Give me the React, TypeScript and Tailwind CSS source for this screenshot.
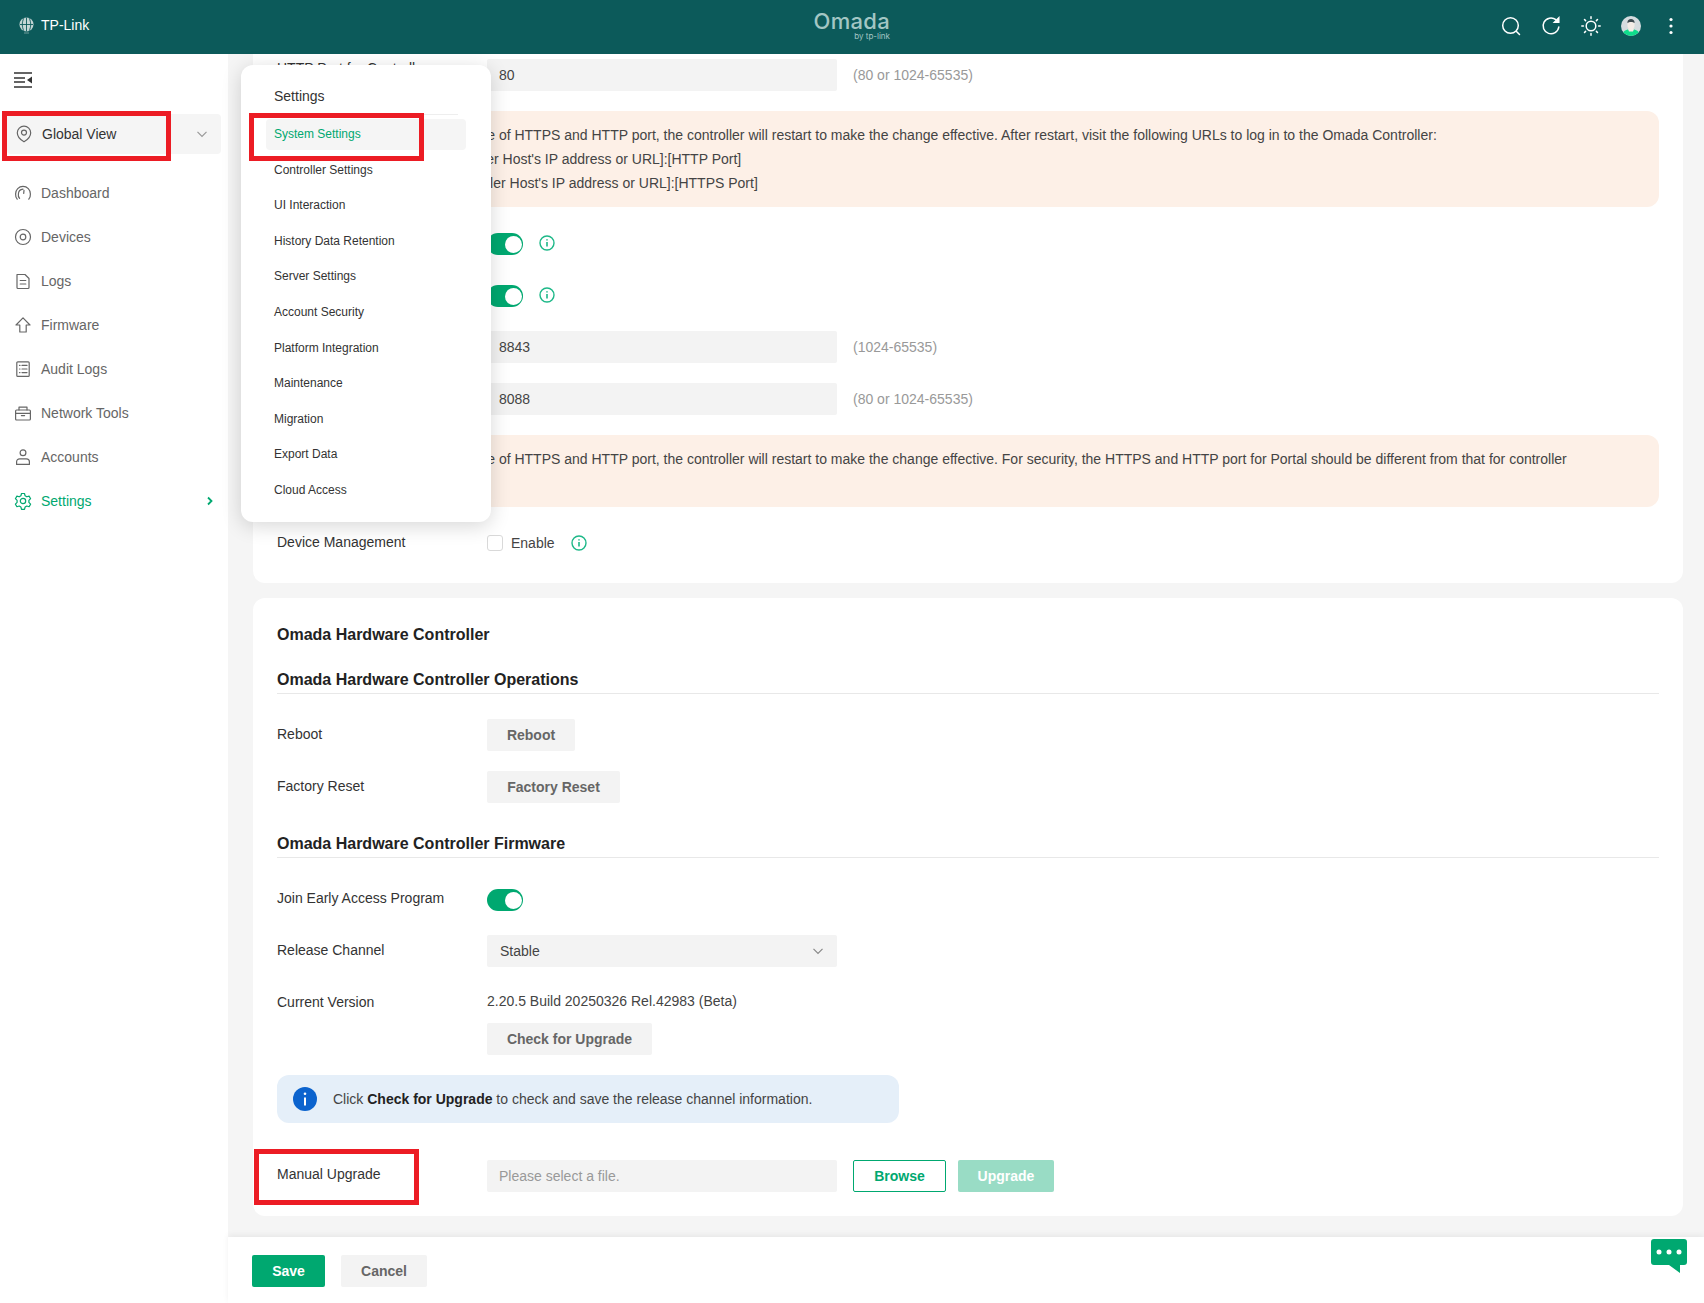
import React from "react";

const font = { fontFamily: '"Liberation Sans", Arial, sans-serif' };

function Ic({ children, size = 18, color = "#666", sw = 1.2 }: { children: React.ReactNode; size?: number; color?: string; sw?: number }) {
  return (
    <svg width={size} height={size} viewBox="0 0 18 18" fill="none" stroke={color} strokeWidth={sw} strokeLinecap="round" strokeLinejoin="round" className="shrink-0">
      {children}
    </svg>
  );
}

const navItems: { label: string; icon: React.ReactNode }[] = [
  { label: "Dashboard", icon: <Ic><path d="M3.2 15.2A7.6 7.6 0 0 1 1.6 10 7.4 7.4 0 0 1 9 2.4 7.4 7.4 0 0 1 16.4 10a7.6 7.6 0 0 1-1.6 5.2" /><path d="M5.6 14.4A5 5 0 0 1 4.4 10 5 5 0 0 1 9 5.2" /><path d="M10 6.4 9.7 9.4" /></Ic> },
  { label: "Devices", icon: <Ic><circle cx="9" cy="9" r="7.5" /><circle cx="9" cy="9" r="2.8" /></Ic> },
  { label: "Logs", icon: <Ic><path d="M3 2.5h8l4 4v9a1 1 0 0 1-1 1H4a1 1 0 0 1-1-1z" /><path d="M6.2 8.5h5.6M6.2 12h5.6" /></Ic> },
  { label: "Firmware", icon: <Ic><path d="M9 1.8 16 9h-3.8v7H5.8V9H2z" /></Ic> },
  { label: "Audit Logs", icon: <Ic><rect x="2.8" y="1.8" width="12.4" height="14.6" rx="1" /><path d="M5.5 5.4h.5M8 5.4h5M5.5 9h.5M8 9h5M5.5 12.6h.5M8 12.6h5" /></Ic> },
  { label: "Network Tools", icon: <Ic><rect x="1.6" y="6" width="14.8" height="10" rx="1" /><path d="M5 6V3.2h8V6M1.6 9.4h14.8M7.4 11.6h3.2" /></Ic> },
  { label: "Accounts", icon: <Ic><circle cx="9" cy="4.8" r="2.9" /><path d="M2.6 16.4v-2.6a3 3 0 0 1 3-3h6.8a3 3 0 0 1 3 3v2.6z" /></Ic> },
];

const menu = ["Controller Settings", "UI Interaction", "History Data Retention", "Server Settings", "Account Security", "Platform Integration", "Maintenance", "Migration", "Export Data", "Cloud Access"];

function Info() {
  return (
    <svg width="16" height="16" viewBox="0 0 16 16" fill="none" stroke="#1db888" strokeWidth="1.4" className="shrink-0">
      <circle cx="8" cy="8" r="7" />
      <path d="M8 7v4.6M8 4.2v1.3" strokeWidth="1.6" />
    </svg>
  );
}

function Toggle() {
  return (
    <div className="w-[36px] h-[22px] mt-[2px] rounded-full bg-[#00a870] flex items-center justify-end pr-[1px]">
      <div className="w-[17px] h-[17px] rounded-full bg-white" />
    </div>
  );
}

function TextBox({ value, hint, muted }: { value: string; hint?: string; muted?: boolean }) {
  return (
    <div className="flex items-center">
      <div className={`w-[350px] h-[32px] bg-[#f3f3f3] rounded-[2px] pl-[12px] flex items-center ${muted ? "text-[#999]" : "text-[#444]"}`}>{value}</div>
      {hint && <div className="ml-[16px] text-[#999]">{hint}</div>}
    </div>
  );
}

function Btn({ children, w }: { children: React.ReactNode; w: string }) {
  return <button className={`${w} h-[32px] rounded-[2px] bg-[#f3f3f3] text-[#666] font-bold text-[14px]`}>{children}</button>;
}

function Row({ label, children }: { label?: string; children: React.ReactNode }) {
  return (
    <div className="flex items-center min-h-[32px]">
      <div className="w-[210px] shrink-0 text-[#333] pb-[2px]">{label}</div>
      {children}
    </div>
  );
}

function Warn({ children }: { children: React.ReactNode }) {
  return <div className="bg-[#fdf0e7] rounded-[12px] py-[12px] pl-[56px] pr-[24px] leading-[24px] text-[#444]">{children}</div>;
}

function Heading({ children }: { children: React.ReactNode }) {
  return <div className="border-b border-[#e8e8e8] pb-[2px] text-[16px] leading-[22px] font-bold text-[#222]">{children}</div>;
}

function RedBox({ className }: { className: string }) {
  return <div className={`absolute border-[5px] border-[#ec1c24] pointer-events-none ${className}`} />;
}

export default function App() {
  return (
    <div style={font} className="relative w-[1704px] h-[1303px] overflow-hidden flex flex-col text-[14px] bg-[#f5f5f5]">
      <header className="h-[54px] shrink-0 bg-[#0c5a5a] flex items-center relative">
        <div className="flex items-center pl-[19px] pb-[4px] text-white">
          <svg width="15" height="17" viewBox="0 0 15 17" className="shrink-0">
            <circle cx="7.5" cy="7.5" r="7" fill="#c4d6d5" />
            <path d="M7.5.5v14M1 7.5h13M4.8 1.2c-2 4-2 8.600 0 12.600M10.200 1.200c2 4 2 8.600 0 12.600" stroke="#0c5a5a" strokeWidth="0.9" fill="none" />
            <path d="M5 16h5" stroke="#6e9c9a" strokeWidth="1" />
          </svg>
          <span className="ml-[7px]">TP-Link</span>
        </div>
        <div className="absolute left-[813px] top-[13px] flex flex-col items-end w-[77px]">
          <span className="text-[22px] leading-[16px] h-[16px] font-medium tracking-[0.3px] text-[#a3c6c4]" style={{ fontFamily: "Inter, sans-serif" }}>Omada</span>
          <span className="text-[8px] leading-[9px] text-[#a3c6c4] mt-[3px]" style={{ fontFamily: "Inter, sans-serif" }}>by tp-link</span>
        </div>
        <div className="ml-auto flex items-center gap-[20px] pr-[23px] pb-[2px]">
          <svg width="20" height="20" viewBox="0 0 20 20" fill="none" stroke="white" strokeWidth="1.5" strokeLinecap="round"><circle cx="9.500" cy="9.500" r="7.800" /><path d="m15.500 15.500 3 3" /></svg>
          <svg width="20" height="20" viewBox="0 0 20 20" fill="none" stroke="white" strokeWidth="1.5" strokeLinecap="round"><path d="M17.800 11A7.900 7.900 0 1 1 14.900 3.700" /><path d="M17.800 1.800v4.400h-4.400z" fill="white" /></svg>
          <svg width="20" height="20" viewBox="0 0 20 20" fill="none" stroke="white" strokeWidth="1.5" strokeLinecap="round"><circle cx="10" cy="10" r="4.800" /><path d="M10 .8v1.600M10 17.600v1.600M.8 10h1.600M17.600 10h1.600M3.500 3.500l1.100 1.100M15.400 15.400l1.100 1.100M3.500 16.500l1.100-1.100M15.400 4.600l1.100-1.100" /></svg>
          <svg width="20" height="20" viewBox="0 0 20 20">
            <defs><clipPath id="av"><circle cx="10" cy="10" r="10" /></clipPath></defs>
            <g clipPath="url(#av)">
              <rect width="20" height="20" fill="#d5dcdf" />
              <ellipse cx="10" cy="19" rx="9" ry="6" fill="#0fdc8c" />
              <ellipse cx="10" cy="9" rx="3.600" ry="5" fill="#f3ece6" />
              <path d="M6.400 7c0-3 1.600-4 3.600-4s3.600 1 3.600 4c-1.500-1.500-5.700-1.500-7.200 0z" fill="#3d4a50" />
              <path d="M7 13h6l-1 2.500h-4z" fill="#f3ece6" />
            </g>
          </svg>
          <svg width="20" height="20" viewBox="0 0 20 20" fill="white"><circle cx="10" cy="3.500" r="1.600" /><circle cx="10" cy="10" r="1.600" /><circle cx="10" cy="16.500" r="1.600" /></svg>
        </div>
      </header>

      <div className="flex-1 flex min-h-0">
        <aside className="w-[228px] shrink-0 bg-white flex flex-col">
          <div className="pl-[14px] pt-[18px] h-[60px]">
            <svg width="19" height="16" viewBox="0 0 19 16" fill="none" stroke="#333" strokeWidth="1.400">
              <path d="M0 1h18M0 6h11M0 10h11M0 15h18" />
              <path d="M18 4.500v7L13 8z" fill="#333" stroke="none" />
            </svg>
          </div>
          <div className="mx-[7px] h-[40px] bg-[#f5f5f5] rounded-[4px] flex items-center pl-[9px] pr-[13px] text-[#333]">
            <svg width="16" height="18" viewBox="0 0 16 18" fill="none" stroke="#666" strokeWidth="1.200"><path d="M8 16.800C4 14.600 1.300 11.500 1.300 7.800a6.700 6.700 0 0 1 13.400 0c0 3.700-2.700 6.800-6.700 9z" /><circle cx="8" cy="7.600" r="2.500" /></svg>
            <span className="ml-[10px]">Global View</span>
            <svg className="ml-auto" width="12" height="12" viewBox="0 0 12 12" fill="none" stroke="#999" strokeWidth="1.200"><path d="m1.500 3.800 4.500 4.500 4.500-4.500" /></svg>
          </div>
          <nav className="mt-[17px] flex flex-col">
            {navItems.map((n) => (
              <div key={n.label} className="h-[44px] flex items-center pl-[14px] text-[#666]">
                {n.icon}
                <span className="ml-[9px]">{n.label}</span>
              </div>
            ))}
            <div className="h-[44px] flex items-center pl-[14px] pr-[14px] text-[#00a870]">
              <Ic color="#00a870"><path d="M7.500 1.500h3l.6 2.300 1.700 1 2.300-.7 1.500 2.600-1.700 1.700v2l1.700 1.700-1.500 2.600-2.300-.7-1.700 1-.6 2.300h-3l-.6-2.300-1.700-1-2.300.7-1.500-2.600 1.700-1.700v-2L1.400 6.700l1.500-2.600 2.300.7 1.700-1z" /><circle cx="9" cy="9" r="2.700" /></Ic>
              <span className="ml-[9px]">Settings</span>
              <svg className="ml-auto" width="8" height="10" viewBox="0 0 8 10" fill="none" stroke="#00a870" strokeWidth="1.800"><path d="m2 1.500 3.500 3.500L2 8.500" /></svg>
            </div>
          </nav>
        </aside>

        <div className="flex-1 min-w-0 flex flex-col">
          <main className="flex-1 min-h-0 overflow-hidden pl-[25px] pr-[21px] flex flex-col gap-[15px]">
            <section className="bg-white rounded-b-[12px] px-[24px] pt-[5px] pb-[24px] flex flex-col gap-[20px]">
              <div className="flex items-start h-[32px]">
                <div className="w-[210px] shrink-0 leading-[16px] text-[#333] pt-[1px]">HTTP Port for Controller</div>
                <TextBox value="80" hint="(80 or 1024-65535)" />
              </div>
              <Warn>
                <div className="pl-[11px]">After changing the value of HTTPS and HTTP port, the controller will restart to make the change effective. After restart, visit the following URLs to log in to the Omada Controller:</div>
                <div className="pl-[24px]">Login: http://[Controller Host's IP address or URL]:[HTTP Port]</div>
                <div className="pl-[24px]">Login: https://[Controller Host's IP address or URL]:[HTTPS Port]</div>
              </Warn>
              <Row><Toggle /><div className="ml-[16px]"><Info /></div></Row>
              <Row><Toggle /><div className="ml-[16px]"><Info /></div></Row>
              <Row><TextBox value="8843" hint="(1024-65535)" /></Row>
              <Row><TextBox value="8088" hint="(80 or 1024-65535)" /></Row>
              <Warn>
                <div className="pl-[11px]">After changing the value of HTTPS and HTTP port, the controller will restart to make the change effective. For security, the HTTPS and HTTP port for Portal should be different from that for controller management.</div>
              </Warn>
              <Row label="Device Management">
                <div className="w-[16px] h-[16px] border border-[#d9d9d9] rounded-[3px] bg-white" />
                <span className="ml-[8px] text-[#444]">Enable</span>
                <div className="ml-[16px]"><Info /></div>
              </Row>
            </section>

            <section className="bg-white rounded-[12px] px-[24px] pt-[26px] pb-[24px] flex flex-col">
              <div className="text-[16px] leading-[21px] font-bold text-[#222]">Omada Hardware Controller</div>
              <div className="mt-[24px]"><Heading>Omada Hardware Controller Operations</Heading></div>
              <div className="mt-[25px] flex flex-col gap-[20px]">
                <Row label="Reboot"><Btn w="w-[88px]">Reboot</Btn></Row>
                <Row label="Factory Reset"><Btn w="w-[133px]">Factory Reset</Btn></Row>
              </div>
              <div className="mt-[30px]"><Heading>Omada Hardware Controller Firmware</Heading></div>
              <div className="mt-[25px] flex flex-col gap-[20px]">
                <Row label="Join Early Access Program"><Toggle /></Row>
                <Row label="Release Channel">
                  <div className="w-[350px] h-[32px] bg-[#f3f3f3] rounded-[2px] pl-[13px] pr-[13px] flex items-center text-[#444]">
                    Stable
                    <svg className="ml-auto" width="12" height="12" viewBox="0 0 12 12" fill="none" stroke="#888" strokeWidth="1.200"><path d="m1.500 3.800 4.500 4.500 4.500-4.500" /></svg>
                  </div>
                </Row>
                <div className="flex items-start">
                  <div className="w-[210px] shrink-0 text-[#333] leading-[28px] pt-[1px]">Current Version</div>
                  <div className="flex flex-col items-start">
                    <div className="text-[#444] leading-[28px] mb-[8px]">2.20.5 Build 20250326 Rel.42983 (Beta)</div>
                    <Btn w="w-[165px]">Check for Upgrade</Btn>
                  </div>
                </div>
                <div className="w-[622px] h-[48px] bg-[#e5eff9] rounded-[12px] flex items-center pl-[16px] text-[#444]">
                  <svg width="24" height="24" viewBox="0 0 24 24" className="shrink-0">
                    <circle cx="12" cy="12" r="12" fill="#0b63ce" />
                    <path d="M12 10.500v8" stroke="white" strokeWidth="2" />
                    <circle cx="12" cy="6.800" r="1.300" fill="white" />
                  </svg>
                  <span className="ml-[16px]">Click <b className="text-[#222]">Check for Upgrade</b> to check and save the release channel information.</span>
                </div>
              </div>
              <div className="mt-[37px] flex items-center">
                <div className="w-[210px] shrink-0 text-[#333] -mt-[4px]">Manual Upgrade</div>
                <TextBox value="Please select a file." muted />
                <button className="ml-[16px] w-[93px] h-[32px] pt-[1px] rounded-[2px] border border-[#00a870] text-[#00a870] font-bold bg-white text-[14px]">Browse</button>
                <button className="ml-[12px] w-[96px] h-[32px] rounded-[2px] bg-[#99dcc5] text-white font-bold text-[14px]">Upgrade</button>
              </div>
            </section>
          </main>
          <footer className="relative h-[66px] shrink-0 bg-white shadow-[0_-2px_6px_rgba(0,0,0,0.06)] pl-[24px] pt-[2px] flex items-center gap-[16px]">
            <button className="w-[73px] h-[32px] rounded-[2px] bg-[#00a870] text-white font-bold text-[14px]">Save</button>
            <button className="w-[86px] h-[32px] rounded-[2px] bg-[#f3f3f3] text-[#666] font-bold text-[14px]">Cancel</button>
          </footer>
        </div>
      </div>

      <div className="absolute left-[241px] top-[65px] w-[250px] h-[457px] bg-white rounded-[12px] shadow-[0_4px_20px_rgba(0,0,0,0.16)] pt-[20px] px-[25px]">
        <div className="mx-[8px] text-[14px] leading-[22px] text-[#333] pb-[7px] border-b border-[#eee]">Settings</div>
        <div className="mt-[4px] h-[31px] pb-[1px] rounded-[4px] bg-[#f5f5f5] flex items-center pl-[8px] text-[12px] text-[#00a870]">System Settings</div>
        {menu.map((m) => (
          <div key={m} className="mt-[4.600px] h-[31px] pb-[1px] flex items-center pl-[8px] text-[12px] text-[#333]">{m}</div>
        ))}
      </div>

      <RedBox className="left-[2px] top-[111px] w-[169px] h-[50px]" />
      <RedBox className="left-[249px] top-[113px] w-[175px] h-[48px]" />
      <RedBox className="left-[254px] top-[1149px] w-[165px] h-[56px]" />

      <svg className="absolute left-[1651px] top-[1239px]" width="36" height="35" viewBox="0 0 36 35">
        <path d="M3 0h30a3 3 0 0 1 3 3v20a3 3 0 0 1-3 3h-4v8l-11-8H3a3 3 0 0 1-3-3V3a3 3 0 0 1 3-3z" fill="#00a870" />
        <circle cx="8" cy="13" r="2.500" fill="white" /><circle cx="18" cy="13" r="2.500" fill="white" /><circle cx="28" cy="13" r="2.500" fill="white" />
      </svg>
    </div>
  );
}
